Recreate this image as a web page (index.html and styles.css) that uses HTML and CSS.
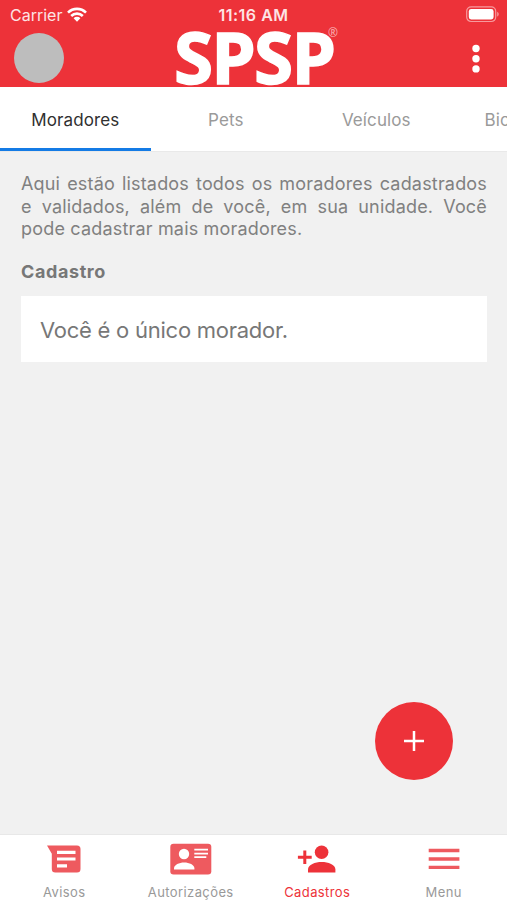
FILE: index.html
```
<!DOCTYPE html>
<html lang="pt-BR">
<head>
    <meta charset="UTF-8">
    <meta name="viewport" content="width=device-width, initial-scale=1.0">
    <title>Cadastros</title>
    <link rel="stylesheet" href="styles.css">
</head>
<body>
    <!-- Cabeçalho com barra de status e logo -->
    <header class="header">
        <div class="status">
            <div class="carrier">
                <span class="carrier-name">Carrier</span>
                <svg width="20" height="15" viewBox="0 0 20 15">
                    <g fill="none" stroke="#fff" stroke-width="2.6">
                        <path d="M1 5.6a12.7 12.7 0 0 1 18 0"/>
                        <path d="M4.2 9a8.2 8.2 0 0 1 11.6 0"/>
                    </g>
                    <path d="M6.6 11.2a4.8 4.8 0 0 1 6.8 0L10 14.8z" fill="#fff"/>
                </svg>
            </div>
            <span class="time">11:16 AM</span>
            <svg class="battery" width="34" height="17" viewBox="0 0 34 17">
                <rect x=".7" y=".9" width="29" height="14.6" rx="4.4" fill="none" stroke="#f79a9d" stroke-width="1.2"/>
                <rect x="2.8" y="3" width="24.8" height="10.4" rx="2.4" fill="#fff"/>
                <path d="M31.2 5.8c2 .8 2 4 0 4.8z" fill="#f79a9d"/>
            </svg>
        </div>
        <div class="brand">
            <div class="avatar"></div>
            <div class="logo">SPSP<span class="reg">®</span></div>
            <svg class="more" width="8" height="30" viewBox="0 0 8 30" fill="#fff">
                <circle cx="4" cy="4.5" r="3.7"/>
                <circle cx="4" cy="14.7" r="3.7"/>
                <circle cx="4" cy="24.9" r="3.7"/>
            </svg>
        </div>
    </header>

    <!-- Abas -->
    <nav class="tabs">
        <a class="tab active">Moradores</a>
        <a class="tab">Pets</a>
        <a class="tab">Veículos</a>
        <a class="tab last">Biometria</a>
    </nav>

    <main class="content">
        <p class="intro">Aqui estão listados todos os moradores cadastrados e validados, além de você, em sua unidade. Você pode cadastrar mais moradores.</p>
        <h2 class="title">Cadastro</h2>
        <div class="card">Você é o único morador.</div>
        <button class="fab" type="button" aria-label="Adicionar">
            <svg width="22" height="22" viewBox="0 0 22 22">
                <path d="M11 1v20M1 11h20" stroke="#fff" stroke-width="2.5"/>
            </svg>
        </button>
    </main>

    <!-- Menu inferior -->
    <nav class="bottom">
        <a class="item">
            <svg width="44" height="34" viewBox="0 0 44 34">
                <path d="M5 3.4h30a3.5 3.5 0 0 1 3.5 3.5v20.2a3.5 3.5 0 0 1-3.5 3.5H13.3a3.5 3.5 0 0 1-3.5-3.5V11.8z" fill="#ee5a5f"/>
                <path d="M15 10.3h18.5M15 17h18.5M15 23.8h10" stroke="#fff" stroke-width="3.2"/>
            </svg>
            <span>Avisos</span>
        </a>
        <a class="item">
            <svg width="44" height="34" viewBox="0 0 44 34">
                <rect x="1.3" y="1.8" width="41" height="30.8" rx="3.3" fill="#ee5a5f"/>
                <circle cx="15" cy="12" r="5.2" fill="#fff"/>
                <path d="M5 27.4v-1.2c0-3.6 5.2-5.8 10.2-5.8s10.2 2.2 10.2 5.8v1.2z" fill="#fff"/>
                <path d="M25.3 7.7H39M25.3 11.6H39M25.3 15.2h12" stroke="#fff" stroke-width="1.7"/>
            </svg>
            <span>Autorizações</span>
        </a>
        <a class="item active">
            <svg width="44" height="34" viewBox="0 0 44 34">
                <g fill="#ed3239">
                    <circle cx="26.6" cy="10.2" r="6.8"/>
                    <path d="M13 30.6v-3.2c0-4.6 7.2-7.3 13.7-7.3s13.7 2.7 13.7 7.3v3.2z"/>
                    <path d="M8.3 8.5h3v5.2h5.4v3h-5.4V22h-3v-5.3H2.9v-3h5.4z"/>
                </g>
            </svg>
            <span>Cadastros</span>
        </a>
        <a class="item">
            <svg width="44" height="34" viewBox="0 0 44 34">
                <path d="M6.7 8.5h30.7M6.7 17h30.7M6.7 25.4h30.7" stroke="#ee5a5f" stroke-width="3.4"/>
            </svg>
            <span>Menu</span>
        </a>
    </nav>
</body>
</html>
```
FILE: styles.css
```
* {
    box-sizing: border-box;
}
body {
    margin: 0;
    height: 900px;
    display: flex;
    flex-direction: column;
    overflow: hidden;
    background-color: #f1f1f1;
    color: #808080;
    font-family: Inter, sans-serif;
}

/* Cabeçalho */
.header {
    height: 87px;
    flex: none;
    background-color: #ed3239;
    color: #fff;
}
.status {
    height: 29px;
    display: grid;
    grid-template-columns: 1fr auto 1fr;
    align-items: center;
    padding: 0 10px;
}
.carrier {
    display: flex;
    align-items: center;
    gap: 5px;
    color: #fde4e5;
}
.carrier-name {
    font-size: 16px;
}
.time {
    font-size: 16px;
    font-weight: 600;
    letter-spacing: 0.5px;
    color: #fde4e5;
}
.battery {
    justify-self: end;
    margin-right: -3px;
}
.brand {
    height: 58px;
    display: grid;
    grid-template-columns: 1fr auto 1fr;
    align-items: center;
    padding: 0 27px 0 14px;
}
.avatar {
    width: 50px;
    height: 50px;
    margin-bottom: 1px;
    border-radius: 50%;
    background-color: #bdbdbd;
}
.logo {
    position: relative;
    width: 146px;
    margin-bottom: 3px;
    font-family: "Open Sans", sans-serif;
    font-size: 71px;
    font-weight: 700;
    line-height: 55px;
    letter-spacing: -1.8px;
    -webkit-text-stroke: 1.5px #fff;
}
.reg {
    position: absolute;
    left: 154px;
    top: -2px;
    font-size: 12px;
    font-weight: 400;
    line-height: 12px;
    letter-spacing: 0;
    color: #f9b5b7;
    -webkit-text-stroke: 0;
}
.more {
    justify-self: end;
    margin-top: 2px;
}

/* Abas */
.tabs {
    height: 65px;
    flex: none;
    display: flex;
    overflow: hidden;
    background-color: #fff;
    border-bottom: 1px solid #e9e9e9;
}
.tab {
    width: 150.5px;
    flex: none;
    padding-top: 4px;
    border-bottom: 3px solid transparent;
    font-size: 17px;
    line-height: 58px;
    text-align: center;
    letter-spacing: 0.1px;
    color: #9a9a9a;
}
.tab.active {
    border-color: #147be5;
    color: #303030;
}
.tab.last {
    padding-left: 33px;
    text-align: left;
}

/* Conteúdo */
.content {
    position: relative;
    flex: 1;
    padding: 21px 20px 0 21px;
}
.intro {
    margin: 0;
    font-size: 18px;
    line-height: 22.6px;
    letter-spacing: 0.18px;
    text-align: justify;
}
.title {
    margin: 20px 0 13px;
    font-size: 18px;
    line-height: 22px;
    font-weight: 700;
    letter-spacing: 0.6px;
    color: #777;
}
.card {
    height: 66px;
    padding: 0 19px;
    background-color: #fff;
    font-size: 22px;
    line-height: 68px;
    letter-spacing: -0.25px;
    color: #777;
}
.fab {
    position: absolute;
    right: 54px;
    bottom: 54px;
    width: 78px;
    height: 78px;
    display: flex;
    align-items: center;
    justify-content: center;
    padding: 0;
    border: none;
    border-radius: 50%;
    background-color: #ed3239;
}

/* Menu inferior */
.bottom {
    height: 66px;
    flex: none;
    display: flex;
    padding-left: 1px;
    background-color: #fff;
    border-top: 1px solid #e8e8e8;
}
.item {
    flex: 1;
    display: flex;
    flex-direction: column;
    align-items: center;
    padding-top: 7px;
    font-size: 13px;
    letter-spacing: 0.4px;
    line-height: 16px;
    color: #999;
}
.item span {
    margin-top: 8px;
}
.item.active {
    color: #ed3239;
}
```
